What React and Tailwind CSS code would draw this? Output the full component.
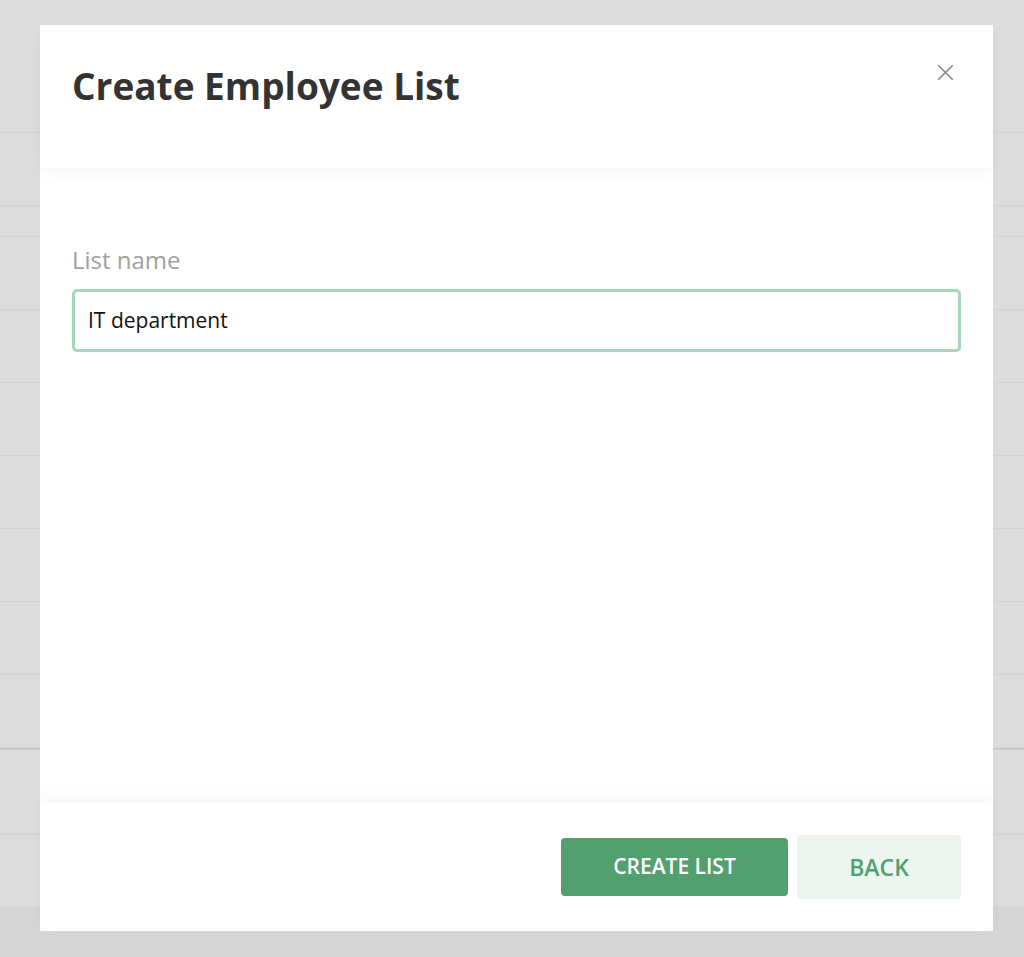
import { X } from 'lucide-react';

const rows = [73, 31, 73, 73, 73, 73, 73, 73, 73];

const Backdrop = () => {
  return (
    <div className="w-full h-[957px] bg-[#dcdcdc] flex flex-col">
      <div className="h-[133px] border-b border-[#d3d3d3] shrink-0" />
      {rows.map((h, i) => (
        <div
          key={i}
          className="shrink-0 border-b border-[#d3d3d3]"
          style={{ height: h }}
        />
      ))}
      <div className="h-[2px] bg-[#c9c9c6] shrink-0" />
      <div className="h-[85px] border-b border-[#d3d3d3] shrink-0" />
      <div className="h-[72px] shrink-0" />
      <div className="flex-1 bg-[#d6d6d6]" />
    </div>
  );
};

const App = () => {
  return (
    <div className="relative w-full h-[957px] overflow-hidden font-['Open_Sans','Lato',sans-serif]">
      <Backdrop />

      {/* modal */}
      <div className="absolute left-[40px] top-[25px] w-[953px] h-[906px] bg-white flex flex-col">
        <div className="relative h-[143px] shrink-0 px-8 pt-[42px] shadow-[0_4px_14px_rgba(0,0,0,0.045)] z-10">
          <h2 className="text-[37px] leading-none font-bold text-[#333333]">
            Create Employee List
          </h2>
          <button className="absolute right-[34px] top-[34px] text-[#8a8a8a]">
            <X className="w-[27px] h-[27px]" strokeWidth={1.5} />
          </button>
        </div>

        <div className="flex-1 px-8 pt-[80px]">
          <label className="block text-[24px] leading-none text-[#a0a0a0] mb-[17px]">
            List name
          </label>
          <div className="h-[63px] border-[3px] border-[#a9d5b9] rounded-[5px] flex items-center px-[13px]">
            <span className="text-[21px] text-[#111111]">IT department</span>
          </div>
        </div>

        <div className="relative h-[128px] shrink-0 flex items-center justify-end gap-[9px] px-8 shadow-[0_-6px_16px_rgba(0,0,0,0.04)]">
          <button className="w-[227px] h-[58px] rounded-[4px] bg-[#529f6f] text-white text-[21px] font-semibold">
            CREATE LIST
          </button>
          <button className="w-[164px] h-[64px] rounded-[4px] bg-[#edf5f0] text-[#529f6f] text-[23px] font-semibold">
            BACK
          </button>
        </div>
      </div>
    </div>
  );
};

export default App;
